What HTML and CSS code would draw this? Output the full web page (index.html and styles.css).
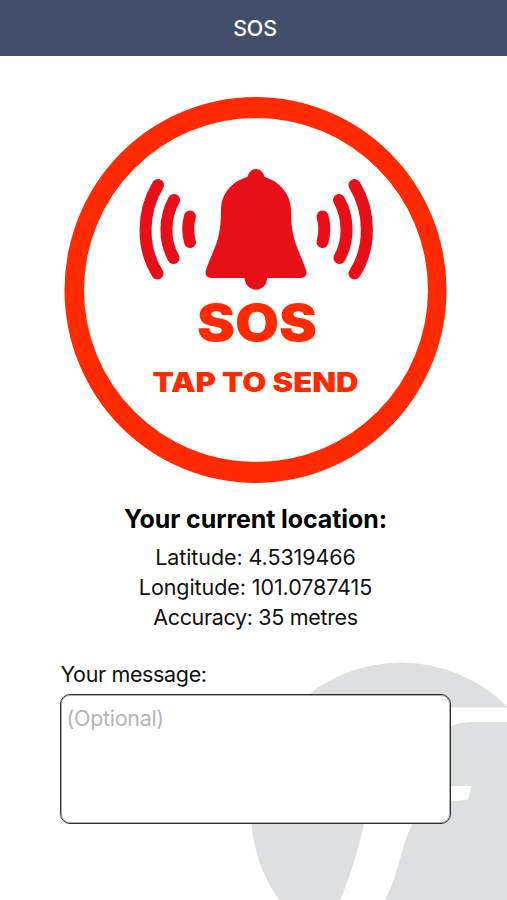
FILE: index.html
```html
<!DOCTYPE html>
<html lang="en">
<head>
    <meta charset="utf-8">
    <meta name="viewport" content="width=device-width, initial-scale=1">
    <title>SOS</title>
    <link rel="stylesheet" href="styles.css">
</head>
<body>
    <header class="navbar">
        <h1>SOS</h1>
    </header>

    <main>
        <!-- logo watermark -->
        <svg class="watermark" viewBox="0 0 267 250" aria-hidden="true">
            <circle cx="161" cy="162.500" r="150" fill="#dddfe0"/>
            <path fill="#fff" d="M267 57.500H212C180 57.500 165 76 156 103L124 175C119 194 112 223 100 250H145C159 225 161 194 172.500 174C180 160 190 153 228 149.500L231.500 136H180L190 105C195 85 208 72 232 72H267Z"/>
        </svg>

        <!-- sos button -->
        <button class="sos" type="button" aria-label="SOS tap to send">
            <svg viewBox="60 90 390 400">
                <path class="ring" fill-rule="evenodd" d="M64.500 290a191 193 0 1 0 382 0a191 193 0 1 0 -382 0zM84 290a172 172 0 1 0 344 0a172 172 0 1 0 -344 0z"/>
                <g class="bell">
                    <path d="M247.500 177C248.500 172 252 169 256 169S263.500 172 264.500 177C279 181 291 194 291 210C291 219 291.500 229 294 238C297 249 302 258 306 270C307.500 274.500 305 278 301 278H267C267 285 262 289.700 256 289.700S245 285 244.500 278H211C207 278 204.500 274.500 206 270C210 258 215 249 218 238C220.500 229 221 219 221 210C221 194 232 181 247.500 177Z"/>
                </g>
                <g class="waves">
                    <path d="M158 185C141.500 212 141.500 248 157.500 273.500"/>
                    <path d="M174 200C164 218 164 241 173.500 258"/>
                    <path d="M190 216.500C187.500 225 187.500 233 190 242"/>
                    <path d="M322.500 216.500C325 225 325 233 322.500 242"/>
                    <path d="M339 200C349 218 349 241 339.500 258"/>
                    <path d="M354.500 185C371 212 371 248 354.500 273.500"/>
                </g>
                <text class="big" x="197" y="340.800" textLength="120" lengthAdjust="spacingAndGlyphs">SOS</text>
                <text class="small" x="152.500" y="391.800" textLength="206" lengthAdjust="spacingAndGlyphs">TAP TO SEND</text>
            </svg>
        </button>

        <!-- location -->
        <section class="location">
            <h2>Your current location:</h2>
            <p class="lat">Latitude: 4.5319466</p>
            <p class="lng">Longitude: 101.0787415</p>
            <p class="acc">Accuracy: 35 metres</p>
        </section>

        <!-- message -->
        <form class="message">
            <label for="message">Your message:</label>
            <textarea id="message" placeholder="(Optional)"></textarea>
        </form>
    </main>
</body>
</html>
```
FILE: styles.css
```css
*{box-sizing:border-box;}
body{margin:0;height:900px;display:flex;flex-direction:column;overflow:hidden;background:#fff;color:#111;font-family:Inter,"Liberation Sans",sans-serif;}

.navbar{height:56px;display:flex;align-items:center;justify-content:center;padding-left:3px;background:#424f6a;color:#fff;}
.navbar h1{margin:0;font-size:21.500px;font-weight:500;line-height:28px;letter-spacing:-.2px;}

main{flex:1;position:relative;display:flex;flex-direction:column;align-items:center;padding-top:34px;}
.watermark{position:absolute;right:0;bottom:0;width:267px;height:250px;}

.sos{width:390px;height:400px;margin-left:3px;padding:0;border:0;background:none;cursor:pointer;}
.sos svg{display:block;width:390px;height:400px;}
.sos .ring{fill:#ff2a00;}
.sos .bell{fill:#e90f18;}
.sos .waves{fill:none;stroke:#e90f18;stroke-width:12;stroke-linecap:round;}
.sos text{font-family:Inter,"Liberation Sans",sans-serif;font-weight:900;fill:#ff2a00;}
.sos .big{font-size:51px;}
.sos .small{font-size:26.500px;}

.location{padding-left:4px;text-align:center;}
.location h2{margin:13px 0 7px;font-size:25px;line-height:32px;font-weight:700;letter-spacing:-.1px;color:#000;}
.location p{margin:0;font-size:21.500px;line-height:30px;letter-spacing:-.08px;}
.location .acc{letter-spacing:-.33px;}

.message{position:relative;width:391px;margin:28px 0 0 3px;display:flex;flex-direction:column;}
.message label{padding-left:1px;font-size:21.500px;line-height:28px;letter-spacing:-.35px;margin-bottom:6px;}
.message textarea{width:391px;height:130px;padding:8px 6px;resize:none;border:1px solid #2e2e2e;border-radius:10px;box-shadow:inset 0 0 0 1px rgba(50,50,50,.4);outline:0;background:#fff;font:21.500px/30px Inter,"Liberation Sans",sans-serif;letter-spacing:-.3px;}
.message textarea::placeholder{color:#b5b5b5;opacity:1;}
```
